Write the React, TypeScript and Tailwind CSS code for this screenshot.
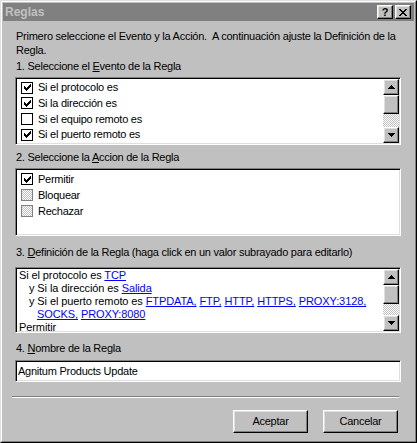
import React from "react";

const raised =
  "border border-t-white border-l-white border-r-black border-b-black shadow-[inset_-1px_-1px_#808080,inset_1px_1px_#dfdfdf]";
const sunken =
  "border border-t-[#808080] border-l-[#808080] border-r-white border-b-white shadow-[inset_1px_1px_#000,inset_-1px_-1px_#dfdfdf]";
const dither =
  "bg-[repeating-conic-gradient(#c0c0c0_0_25%,#ffffff_0_50%)] bg-[length:2px_2px]";

function Check() {
  return (
    <svg width="7" height="7" viewBox="0 0 7 7" shapeRendering="crispEdges">
      <path
        fill="#000"
        d="M6 0h1v3H6zM5 1h1v3H5zM4 2h1v3H4zM0 2h1v3H0zM1 3h1v3H1zM2 4h1v3H2zM3 3h1v3H3z"
      />
    </svg>
  );
}

function CheckBox({ checked, disabled }: { checked?: boolean; disabled?: boolean }) {
  return (
    <span
      className={
        "flex h-[12px] w-[12px] shrink-0 items-center justify-center border " +
        (disabled ? "border-[#808080] " + dither : "border-black bg-white")
      }
    >
      {checked && <Check />}
    </span>
  );
}

function Arrow({ down }: { down?: boolean }) {
  return (
    <svg width="7" height="4" viewBox="0 0 7 4" shapeRendering="crispEdges">
      <path
        fill="#000"
        d={down ? "M0 0h7v1H0zM1 1h5v1H1zM2 2h3v1H2zM3 3h1v1H3z" : "M3 0h1v1H3zM2 1h3v1H2zM1 2h5v1H1zM0 3h7v1H0z"}
      />
    </svg>
  );
}

function ScrollBar() {
  return (
    <div className="flex w-[16px] shrink-0 flex-col">
      <div className={"flex h-[16px] items-center justify-center bg-[#c0c0c0] " + raised}>
        <Arrow />
      </div>
      <div className={"h-[19px] bg-[#c0c0c0] " + raised} />
      <div className={"flex-1 " + dither} />
      <div className={"flex h-[16px] items-center justify-center bg-[#c0c0c0] " + raised}>
        <Arrow down />
      </div>
    </div>
  );
}

function Label({ n, pre, u, post }: { n: string; pre: string; u: string; post: string }) {
  return (
    <div className="pl-[1px] leading-[14px]">
      {n} {pre}
      <span className="underline">{u}</span>
      {post}
    </div>
  );
}

function Link({ children }: { children: React.ReactNode }) {
  return <span className="text-[#0000ff] underline">{children}</span>;
}

const events = [
  { t: "Si el protocolo es", c: true },
  { t: "Si la dirección es", c: true },
  { t: "Si el equipo remoto es", c: false },
  { t: "Si el puerto remoto es", c: true },
];

const actions = [
  { t: "Permitir", c: true, d: false },
  { t: "Bloquear", c: false, d: true },
  { t: "Rechazar", c: false, d: true },
];

export default function App() {
  return (
    <div
      className="h-[443px] w-[417px] overflow-hidden border border-t-[#dfdfdf] border-l-[#dfdfdf] border-r-black border-b-black bg-[#c0c0c0] text-[11px] tracking-[-0.25px] text-black"
      style={{ fontFamily: '"Liberation Sans", Arial, sans-serif' }}
    >
      <div className="flex h-full flex-col border border-t-white border-l-white border-r-[#808080] border-b-[#808080] p-[1px]">
        {/* title bar */}
        <div className="flex h-[18px] shrink-0 items-center bg-[#808080] pl-[2px] pr-[3px]">
          <span className="flex-1 text-[12px] font-bold tracking-normal text-[#c0c0c0]">Reglas</span>
          <div className={"flex h-[14px] w-[16px] items-center justify-center bg-[#c0c0c0] text-[11px] font-bold leading-none " + raised}>
            ?
          </div>
          <div className={"ml-[2px] flex h-[14px] w-[16px] items-center justify-center bg-[#c0c0c0] " + raised}>
            <svg width="8" height="7" viewBox="0 0 8 7" shapeRendering="crispEdges">
              <path
                fill="#000"
                d="M0 0h2v1H0zM6 0h2v1H6zM1 1h2v1H1zM5 1h2v1H5zM2 2h4v1H2zM3 3h2v1H3zM2 4h4v1H2zM1 5h2v1H1zM5 5h2v1H5zM0 6h2v1H0zM6 6h2v1H6z"
              />
            </svg>
          </div>
        </div>

        {/* body */}
        <div className="flex flex-1 flex-col pl-[12px] pr-[13px]">
          <div className="mt-[8px] pl-[1px] leading-[14px]">
            Primero seleccione el Evento y la Acción.&nbsp; A continuación ajuste la Definición de la Regla.
          </div>

          <div className="mt-[2px]">
            <Label n="1." pre="Seleccione el " u="E" post="vento de la Regla" />
          </div>
          <div className={"mt-[4px] flex h-[68px] bg-white p-[1px] " + sunken}>
            <div className="flex-1 pl-[4px] pt-[1px]">
              {events.map((e) => (
                <div key={e.t} className="flex h-[15.67px] items-center gap-[5px]">
                  <CheckBox checked={e.c} />
                  <span className="leading-[15px]">{e.t}</span>
                </div>
              ))}
            </div>
            <ScrollBar />
          </div>

          <div className="mt-[5px]">
            <Label n="2." pre="Seleccione la " u="A" post="ccion de la Regla" />
          </div>
          <div className={"mt-[4px] h-[68px] bg-white p-[1px] pl-[5px] pt-[2px] " + sunken}>
            {actions.map((a) => (
              <div key={a.t} className="flex h-[16px] items-center gap-[5px]">
                <CheckBox checked={a.c} disabled={a.d} />
                <span className="leading-[15px]">{a.t}</span>
              </div>
            ))}
          </div>

          <div className="mt-[9px]">
            <Label n="3." pre="" u="D" post="efinición de la Regla (haga click en un valor subrayado para editarlo)" />
          </div>
          <div className={"mt-[8px] flex h-[66px] bg-white p-[1px] " + sunken}>
            <div className="flex-1 overflow-hidden pl-[2px] leading-[13px] tracking-[-0.1px]">
              <div>
                Si el protocolo es <Link>TCP</Link>
              </div>
              <div className="pl-[10px]">
                y Si la dirección es <Link>Salida</Link>
              </div>
              <div className="pl-[18px] -indent-[8px]">
                y Si el puerto remoto es <Link>FTPDATA,</Link> <Link>FTP,</Link> <Link>HTTP,</Link>{" "}
                <Link>HTTPS,</Link> <Link>PROXY:3128,</Link> <Link>SOCKS,</Link> <Link>PROXY:8080</Link>
              </div>
              <div className="leading-[12px]">Permitir</div>
            </div>
            <ScrollBar />
          </div>

          <div className="mt-[8px]">
            <Label n="4." pre="" u="N" post="ombre de la Regla" />
          </div>
          <div className={"mt-[5px] flex h-[22px] items-center bg-white pl-[2px] " + sunken}>
            Agnitum Products Update
          </div>

          <div className="-ml-[3px] mr-[2px] mt-[14px] h-[2px] border-t border-t-[#808080] border-b border-b-white" />

          <div className="mt-[12px] flex justify-end gap-[15px] pr-[3px]">
            <button className={"h-[23px] w-[75px] bg-[#c0c0c0] " + raised}>Aceptar</button>
            <button className={"h-[23px] w-[75px] bg-[#c0c0c0] " + raised}>Cancelar</button>
          </div>
        </div>
      </div>
    </div>
  );
}
